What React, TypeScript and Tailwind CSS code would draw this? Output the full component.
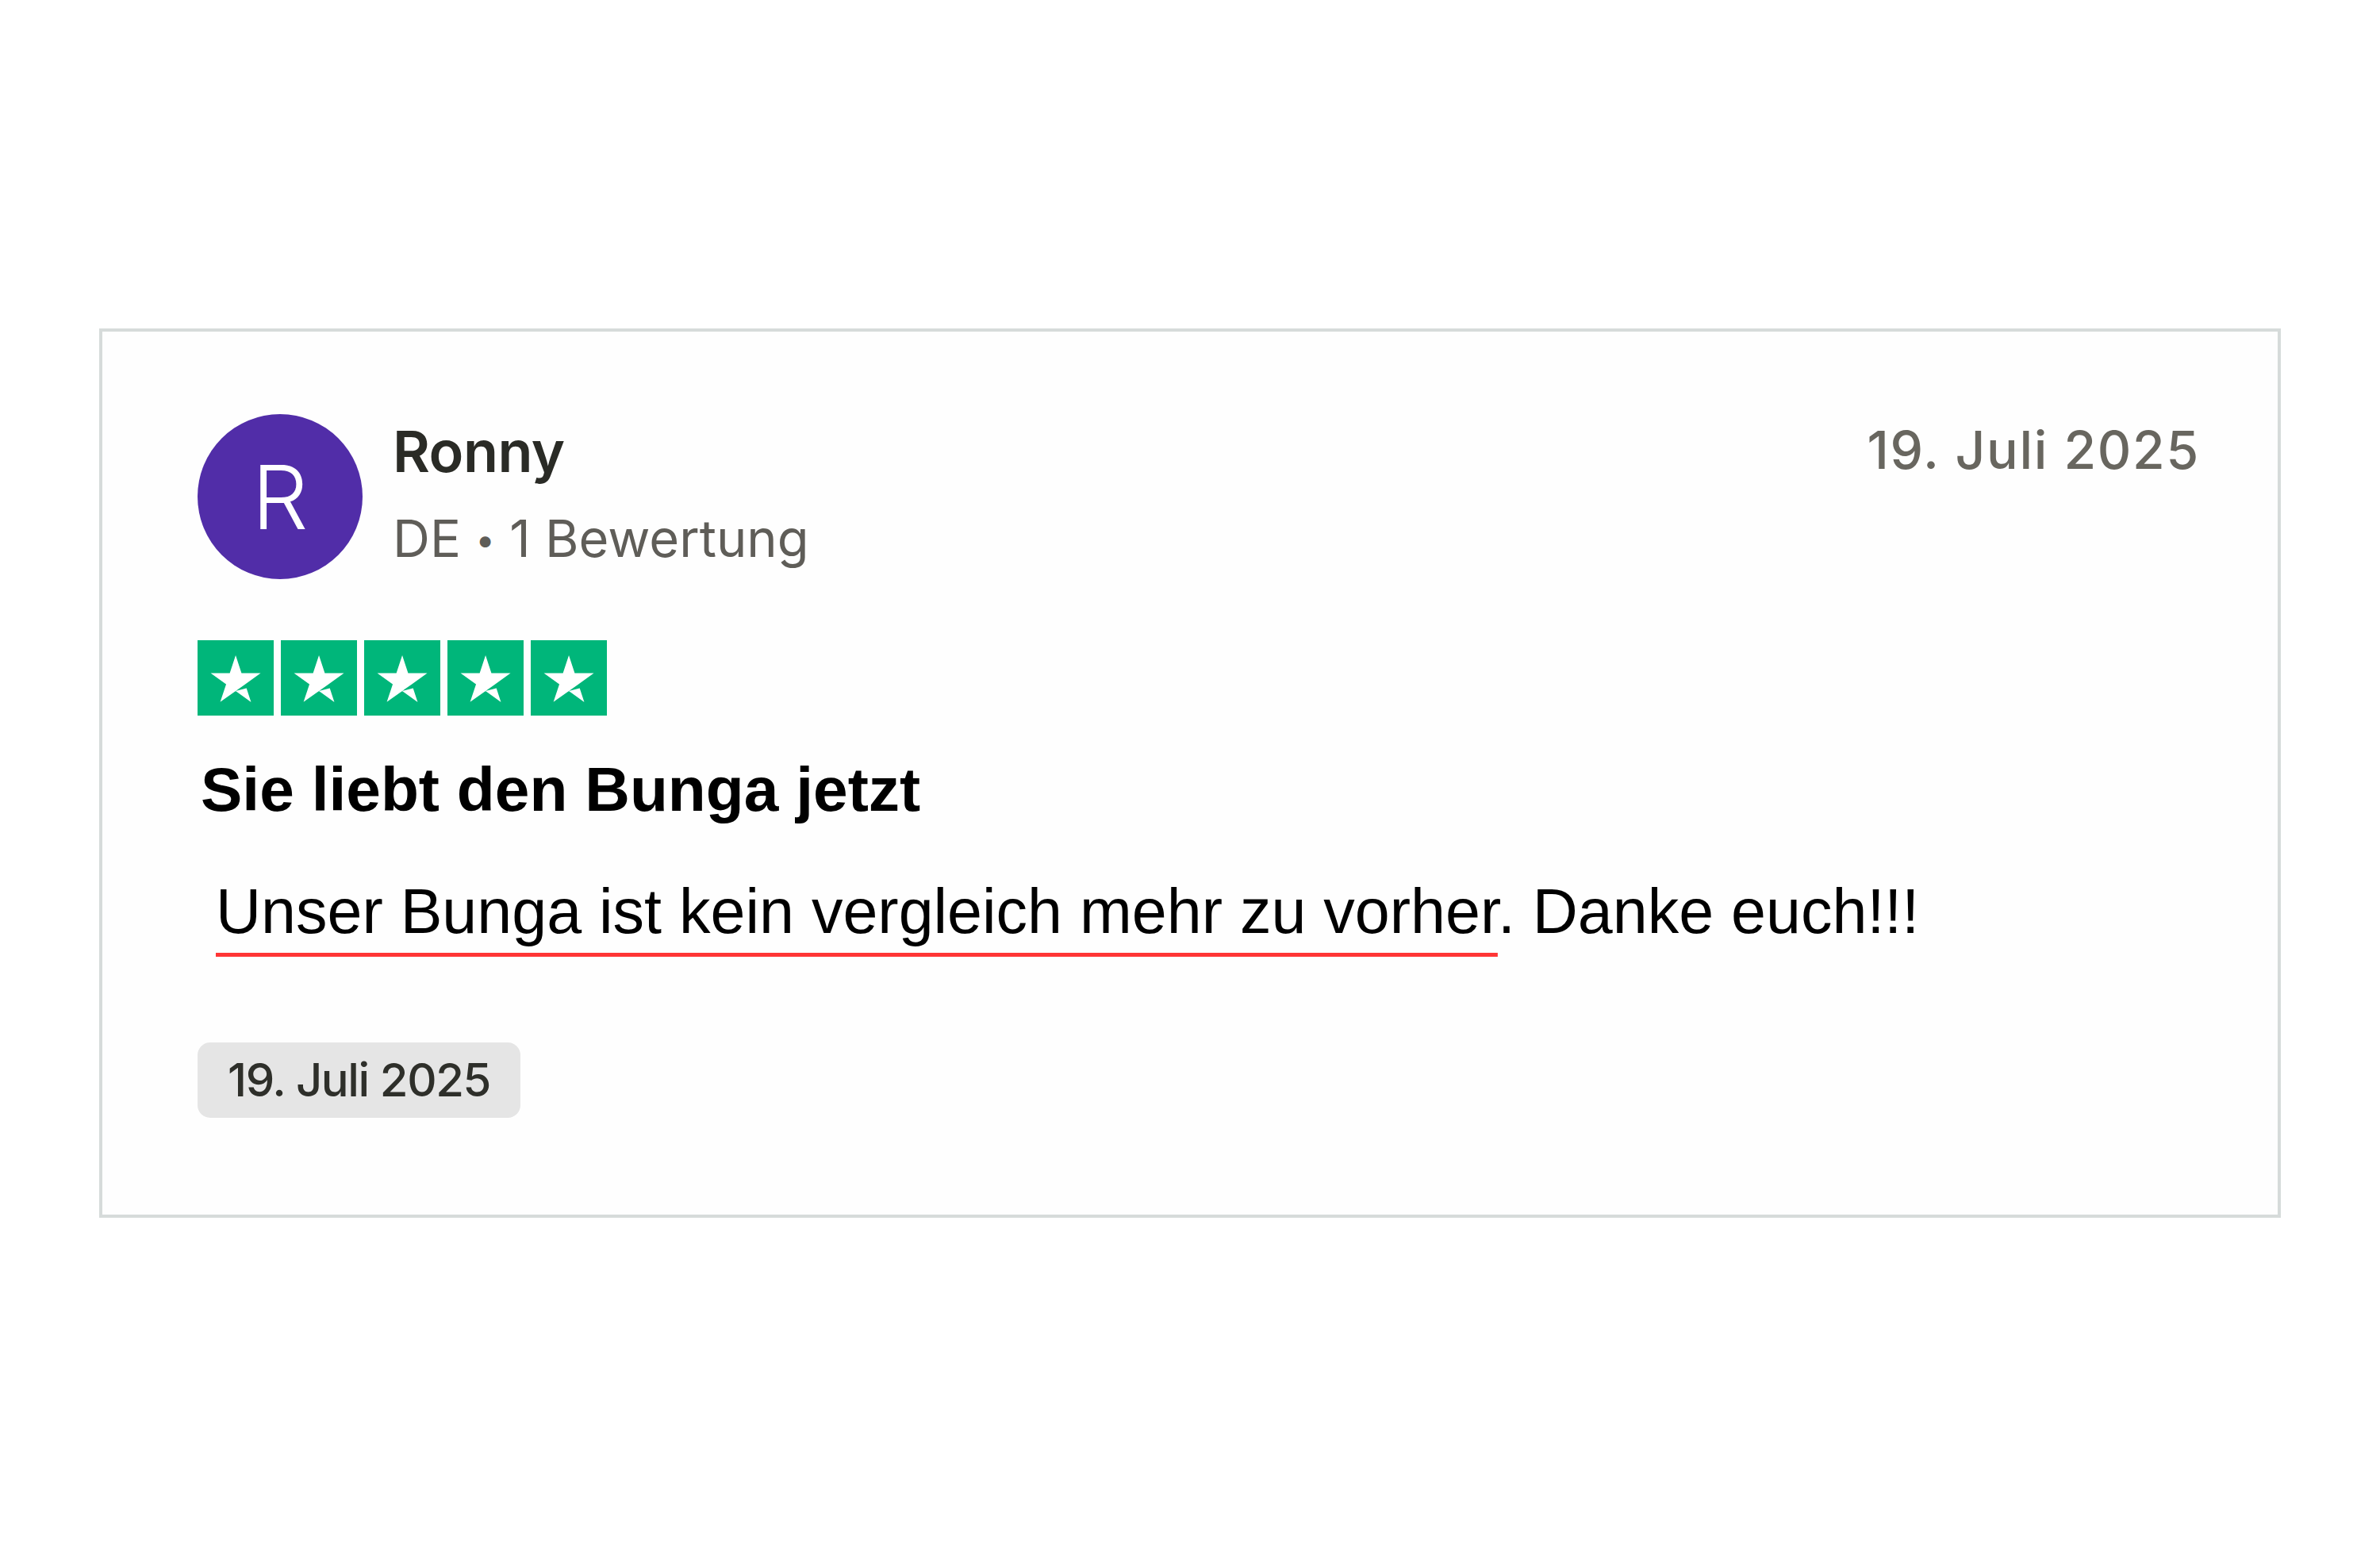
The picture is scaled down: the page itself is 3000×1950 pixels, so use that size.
const STARS = [0, 1, 2, 3, 4];

function TrustStar() {
  return (
    <svg viewBox="0 0 96 96" className="h-[95px] w-[96px]" preserveAspectRatio="none">
      <rect width="96" height="96" fill="#00B67A" />
      <path
        fill="#FFFFFF"
        d="M48.04 64.69L61.72 61.23L67.44 78.85L48.04 64.69ZM79.54 41.92H55.44L48.04 19.23L40.63 41.92H16.54L36.04 55.98L28.63 78.66L48.13 64.6L60.13 55.98L79.54 41.92Z"
      />
    </svg>
  );
}

export default function App() {
  return (
    <div className="min-h-[1950px] bg-white pt-[414px]">
      <div className="mx-[125px] border-4 border-[#d6dbda] bg-[#fefefe] pb-[122px] pl-[120px] pr-[98px] pt-[104px]">
        <div className="flex items-start justify-between">
          <div className="flex items-start gap-[38px]">
            <div className="flex h-[208px] w-[208px] items-center justify-center rounded-full bg-[#512da8]">
              <span className="font-['Inter',sans-serif] text-[112px] leading-none font-light text-white">R</span>
            </div>
            <div className="flex flex-col pt-[11px] font-['Inter',sans-serif]">
              <span className="text-[72px] leading-[72px] font-semibold tracking-[-0.5px] text-[#2a2b26]">Ronny</span>
              <span className="mt-[42px] text-[65px] leading-[64px] text-[#5f5d58]">
                DE <span className="text-[44px] align-[6px]">•</span> 1 Bewertung
              </span>
            </div>
          </div>
          <div className="pt-[12px] font-['Inter',sans-serif] text-[66px] leading-[66px] font-medium tracking-[1.7px] text-[#68665f]">
            19. Juli 2025
          </div>
        </div>

        <div className="mt-[77px] flex gap-[9px]">
          {STARS.map((i) => (
            <TrustStar key={i} />
          ))}
        </div>

        <h2 className="mt-[54px] ml-[4px] font-['Liberation_Sans',Arial,sans-serif] text-[78.5px] leading-none font-bold text-black">
          Sie liebt den Bunga jetzt
        </h2>

        <p className="mt-[74px] ml-[23px] font-['Liberation_Sans',Arial,sans-serif] text-[79px] leading-none text-black">
          <span className="underline decoration-[#ff3535] decoration-[5px] underline-offset-[25px]">
            Unser Bunga ist kein vergleich mehr zu vorher
          </span>
          . Danke euch!!!
        </p>

        <div className="mt-[126px] inline-flex h-[95px] items-center rounded-[16px] bg-[#e5e5e5] px-[38px] font-['Inter',sans-serif] text-[58px] font-medium tracking-[-1.4px] text-[#2e2f2a]">
          19. Juli 2025
        </div>
      </div>
    </div>
  );
}
